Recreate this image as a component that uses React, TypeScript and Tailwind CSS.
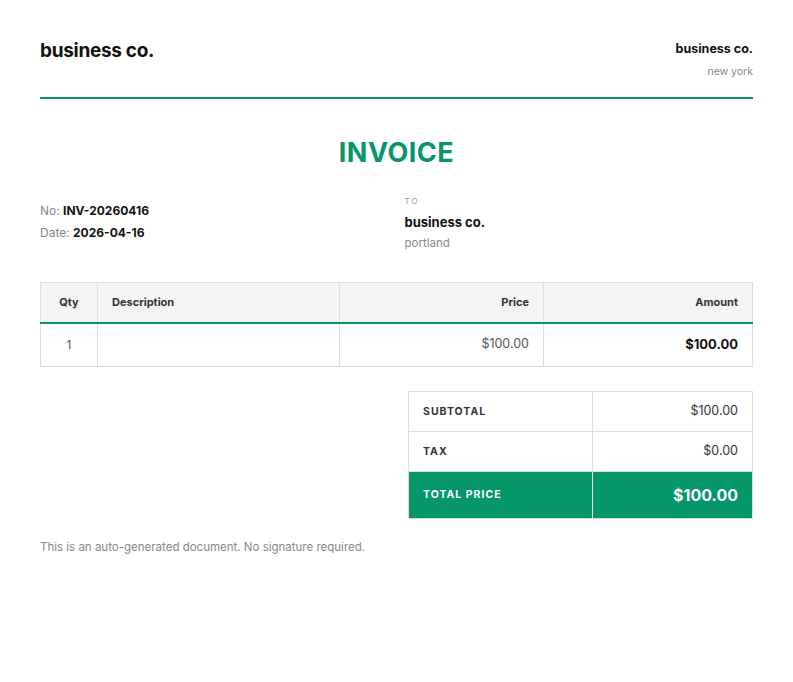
import React from "react";

export default function App() {
  return (
    <div className="min-h-[682px] bg-white px-10 pt-[38px] text-[#111]" style={{ fontFamily: "Inter, 'Noto Sans', sans-serif" }}>
      <div className="flex justify-between border-b-2 border-[#059669] pb-[18px]">
        <div className="text-[19px] font-bold leading-[26px] tracking-[-0.3px]">business co.</div>
        <div className="text-right pt-[3px]">
          <div className="text-[12.5px] font-bold leading-[16px]">business co.</div>
          <div className="mt-[8px] text-[10.5px] leading-[14px] text-[#888]">new york</div>
        </div>
      </div>

      <div className="mt-[36px] text-center text-[27px] font-bold leading-[36px] tracking-[0.5px] text-[#059669]">INVOICE</div>

      <div className="mt-[24px] grid grid-cols-2 gap-4">
        <div className="pt-[5px] text-[12px] leading-[22px]">
          <div><span className="text-[#888]">No: </span><span className="font-bold">INV-20260416</span></div>
          <div><span className="text-[#888]">Date: </span><span className="font-bold">2026-04-16</span></div>
        </div>
        <div>
          <div className="text-[8px] leading-[12px] tracking-[2px] text-[#999]">TO</div>
          <div className="mt-[6px] text-[13px] font-bold leading-[18px]">business co.</div>
          <div className="mt-[4px] text-[11.5px] leading-[16px] text-[#888]">portland</div>
        </div>
      </div>

      <table className="mt-[31px] w-full border-collapse text-[11px]">
        <thead>
          <tr className="bg-[#f4f4f4] border-b-2 border-[#059669]">
            <th className="h-[40px] w-[57px] border border-[#ddd] border-b-[#059669] border-b-2 text-center font-bold text-[#333]">Qty</th>
            <th className="h-[40px] w-[242px] border border-[#ddd] border-b-[#059669] border-b-2 px-[14px] text-left font-bold text-[#333]">Description</th>
            <th className="h-[40px] w-[204px] border border-[#ddd] border-b-[#059669] border-b-2 px-[14px] text-right font-bold text-[#333]">Price</th>
            <th className="h-[40px] border border-[#ddd] border-b-[#059669] border-b-2 px-[14px] text-right font-bold text-[#333]">Amount</th>
          </tr>
        </thead>
        <tbody>
          <tr>
            <td className="h-[44px] border border-[#ddd] text-center text-[12px] text-[#555]">1</td>
            <td className="h-[44px] border border-[#ddd] px-[14px]"></td>
            <td className="h-[44px] border border-[#ddd] px-[14px] text-right text-[12.5px] text-[#555]">$100.00</td>
            <td className="h-[44px] border border-[#ddd] px-[14px] text-right text-[13px] font-bold">$100.00</td>
          </tr>
        </tbody>
      </table>

      <div className="mt-[24px] flex justify-end">
        <table className="w-[345px] border-collapse">
          <tbody>
            <tr>
              <td className="h-[40px] w-[184px] border border-[#ddd] px-[14px] text-[10.5px] font-bold tracking-[1px] text-[#333]">SUBTOTAL</td>
              <td className="h-[40px] border border-[#ddd] px-[14px] text-right text-[12.5px] text-[#333]">$100.00</td>
            </tr>
            <tr>
              <td className="h-[40px] border border-[#ddd] px-[14px] text-[10.5px] font-bold tracking-[1px] text-[#333]">TAX</td>
              <td className="h-[40px] border border-[#ddd] px-[14px] text-right text-[12.5px] text-[#333]">$0.00</td>
            </tr>
            <tr className="bg-[#059669]">
              <td className="h-[47px] border border-[#ddd] border-r-[#e5e5e5] px-[14px] text-[10.5px] font-bold tracking-[1px] text-white">TOTAL PRICE</td>
              <td className="h-[47px] border border-[#ddd] px-[14px] text-right text-[16px] font-bold text-white">$100.00</td>
            </tr>
          </tbody>
        </table>
      </div>

      <div className="mt-[20px] text-[11.5px] leading-[16px] text-[#888]">This is an auto-generated document. No signature required.</div>
    </div>
  );
}
